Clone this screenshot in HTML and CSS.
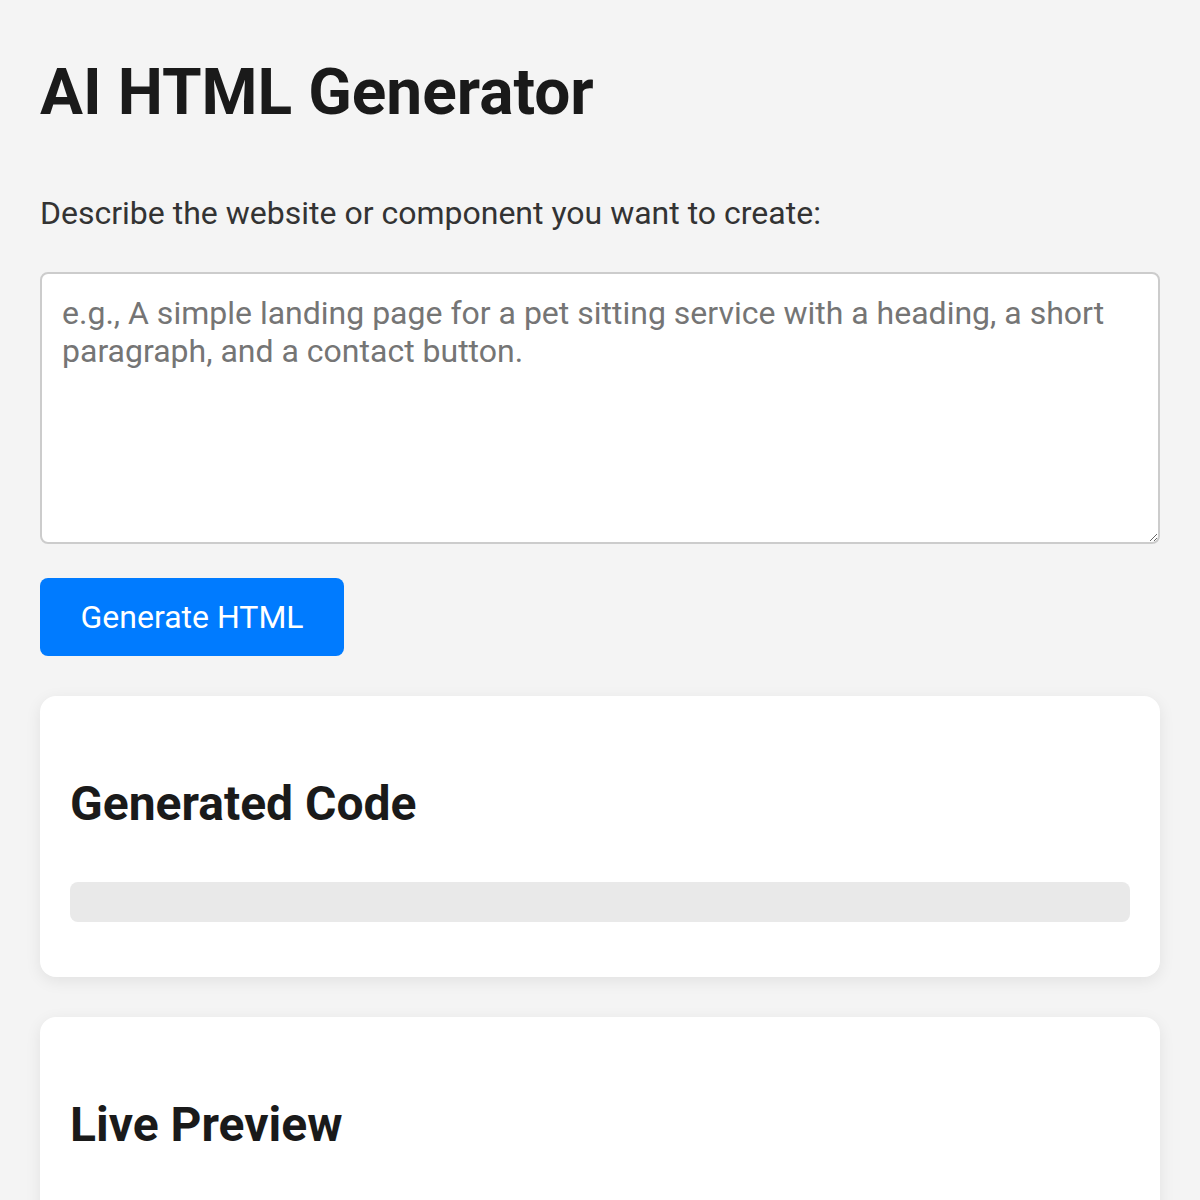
FILE: index.html
```html
<!DOCTYPE html>
<html lang="en">
<head>
<meta charset="utf-8">
<title>AI HTML Generator</title>
<link rel="stylesheet" href="styles.css">
</head>
<body>
<main class="page">
  <h1 class="title">AI HTML Generator</h1>
  <label class="prompt-label" for="prompt">Describe the website or component you want to create:</label>
  <textarea id="prompt" class="prompt" placeholder="e.g., A simple landing page for a pet sitting service with a heading, a short paragraph, and a contact button."></textarea>
  <div class="actions"><button class="btn" type="button">Generate HTML</button></div>
  <section class="card">
    <h2 class="card-title">Generated Code</h2>
    <pre class="code"><code></code></pre>
  </section>
  <section class="card">
    <h2 class="card-title">Live Preview</h2>
    <div class="preview"></div>
  </section>
</main>
</body>
</html>
```
FILE: styles.css
```css
* { box-sizing: border-box; }
html, body { margin: 0; padding: 0; }
body {
  background: #f4f4f4;
  font-family: Roboto, "Liberation Sans", Arial, sans-serif;
  color: #333;
}
.page {
  padding: 0 40px 40px;
  display: flex;
  flex-direction: column;
}
.title {
  margin: 55px 0 0;
  font-size: 64px;
  line-height: 75px;
  font-weight: 700;
  color: #1a1a1a;
}
.prompt-label {
  margin-top: 64px;
  font-size: 32px;
  line-height: 38px;
  color: #333;
}
.prompt {
  margin-top: 40px;
  width: 100%;
  height: 272px;
  padding: 20px;
  border: 2px solid #ccc;
  border-radius: 8px;
  background: #fff;
  font-family: Roboto, "Liberation Sans", Arial, sans-serif;
  font-size: 32px;
  line-height: 38px;
  color: #333;
  resize: vertical;
}
.prompt::placeholder { color: #757575; }
.actions { margin-top: 34px; display: flex; }
.btn {
  padding: 20px 40.5px;
  border: none;
  border-radius: 8px;
  background: #007bff;
  color: #fff;
  font-family: Roboto, "Liberation Sans", Arial, sans-serif;
  font-size: 32px;
  line-height: 38px;
}
.card {
  margin-top: 40px;
  background: #fff;
  border-radius: 16px;
  box-shadow: 0 4px 16px rgba(0,0,0,0.08);
  padding: 80px 30px 55px;
}
.card-title {
  margin: 0;
  font-size: 48px;
  line-height: 56px;
  font-weight: 700;
  color: #1a1a1a;
}
.code {
  margin: 50px 0 0;
  padding: 20px;
  min-height: 40px;
  background: #e9e9e9;
  border-radius: 8px;
}
.preview { min-height: 300px; }
```
